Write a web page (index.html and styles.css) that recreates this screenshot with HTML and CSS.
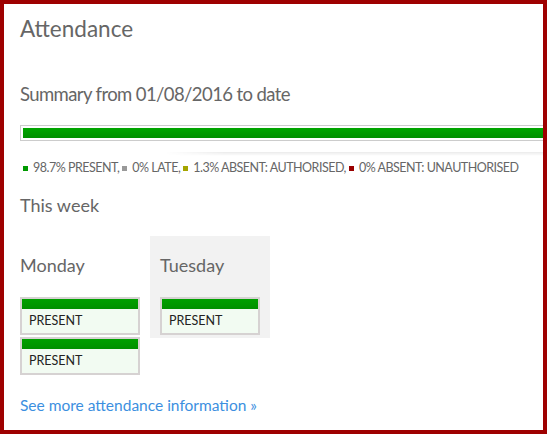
FILE: index.html
```html
<!DOCTYPE html>
<html lang="en">
  <head>
    <meta charset="UTF-8" />
    <meta name="viewport" content="width=device-width, initial-scale=1.0" />
    <title>Attendance</title>
    <link rel="stylesheet" href="styles.css">
  </head>
  <body>
    <div class="panel">
      <h1>Attendance</h1>
      <h2 class="summary-title">Summary from 01/08/2016 to date</h2>
      <div class="progress">
        <div class="progress-bar" style="width: 98.7%"></div>
      </div>
      <div class="shade"></div>
      <ul class="legend">
        <li><span class="key key-present"></span>98.7% PRESENT,</li>
        <li><span class="key key-late"></span>0% LATE,</li>
        <li><span class="key key-auth"></span>1.3% ABSENT: AUTHORISED,</li>
        <li><span class="key key-unauth"></span>0% ABSENT: UNAUTHORISED</li>
      </ul>
      <h2 class="week-title">This week</h2>
      <div class="week">
        <div class="day">
          <h3>Monday</h3>
          <div class="mark"><div class="mark-bar"></div><div class="mark-text">PRESENT</div></div>
          <div class="mark"><div class="mark-bar"></div><div class="mark-text">PRESENT</div></div>
        </div>
        <div class="day today">
          <h3>Tuesday</h3>
          <div class="mark"><div class="mark-bar"></div><div class="mark-text">PRESENT</div></div>
        </div>
      </div>
      <a class="more" href="#">See more attendance information &raquo;</a>
    </div>
  </body>
</html>
```

FILE: styles.css
```css
/* Attendance widget */
html,
body {
  margin: 0;
  padding: 0;
  height: 100%;
}

body {
  font-family: "Lato", "Open Sans", sans-serif;
  color: #666;
  background-color: #fff;
}

.panel {
  box-sizing: border-box;
  height: 434px;
  border: 4px solid #9e0000;
  padding: 0 0 0 16px;
  overflow: hidden;
}

h1 {
  font-size: 22.5px;
  font-weight: normal;
  margin: 11px 0 0;
  line-height: 28px;
}

.summary-title {
  font-size: 18.5px;
  font-weight: normal;
  letter-spacing: -0.6px;
  margin: 39px 0 0;
  line-height: 24px;
}

.progress {
  margin-top: 19px;
  margin-right: -20px;
  border: 1px solid #ccc;
  padding: 2px;
}

.progress-bar {
  height: 10px;
  background: linear-gradient(#00a600, #008f00);
}

.shade {
  height: 4px;
  margin: 11px -20px 0 145px;
  background: linear-gradient(rgba(0, 0, 0, 0.08), rgba(0, 0, 0, 0));
  -webkit-mask-image: linear-gradient(to right, transparent, #000 60px);
  mask-image: linear-gradient(to right, transparent, #000 60px);
}

.legend {
  list-style: none;
  margin: 4px 0 0;
  padding: 0 0 0 3px;
  display: flex;
  font-size: 12.5px;
  letter-spacing: -0.5px;
  line-height: 16px;
  color: #666;
  white-space: nowrap;
}

.legend li {
  margin-right: 3px;
}

.key {
  display: inline-block;
  width: 5px;
  height: 5px;
  margin: 0 5px 1px 0;
}

.key-present { background-color: #009900; }
.key-late { background-color: #999; }
.key-auth { background-color: #a5a500; }
.key-unauth { background-color: #990000; }

.week-title {
  font-size: 18px;
  font-weight: normal;
  margin: 17px 0 0;
  line-height: 24px;
}

.week {
  display: flex;
  align-items: flex-start;
  gap: 10px;
  margin-top: 19px;
}

.day {
  width: 120px;
  padding: 10px 0 0;
}

.day.today {
  width: 100px;
  padding: 10px 10px 1px;
  background-color: #f2f2f2;
}

h3 {
  font-size: 18px;
  font-weight: normal;
  margin: 7px 0 0;
  line-height: 24px;
  padding-bottom: 20px;
}

.mark {
  border: 2px solid #d6d2d2;
  margin-bottom: 2px;
}

.mark-bar {
  height: 10px;
  background: linear-gradient(#00a000, #009000);
}

.mark-text {
  background-color: #f2fbf2;
  color: #222;
  font-size: 12.5px;
  line-height: 24px;
  padding-left: 7px;
}

.more {
  display: inline-block;
  margin-top: 19px;
  font-size: 15.5px;
  color: #3c8fe0;
  text-decoration: none;
}
```
